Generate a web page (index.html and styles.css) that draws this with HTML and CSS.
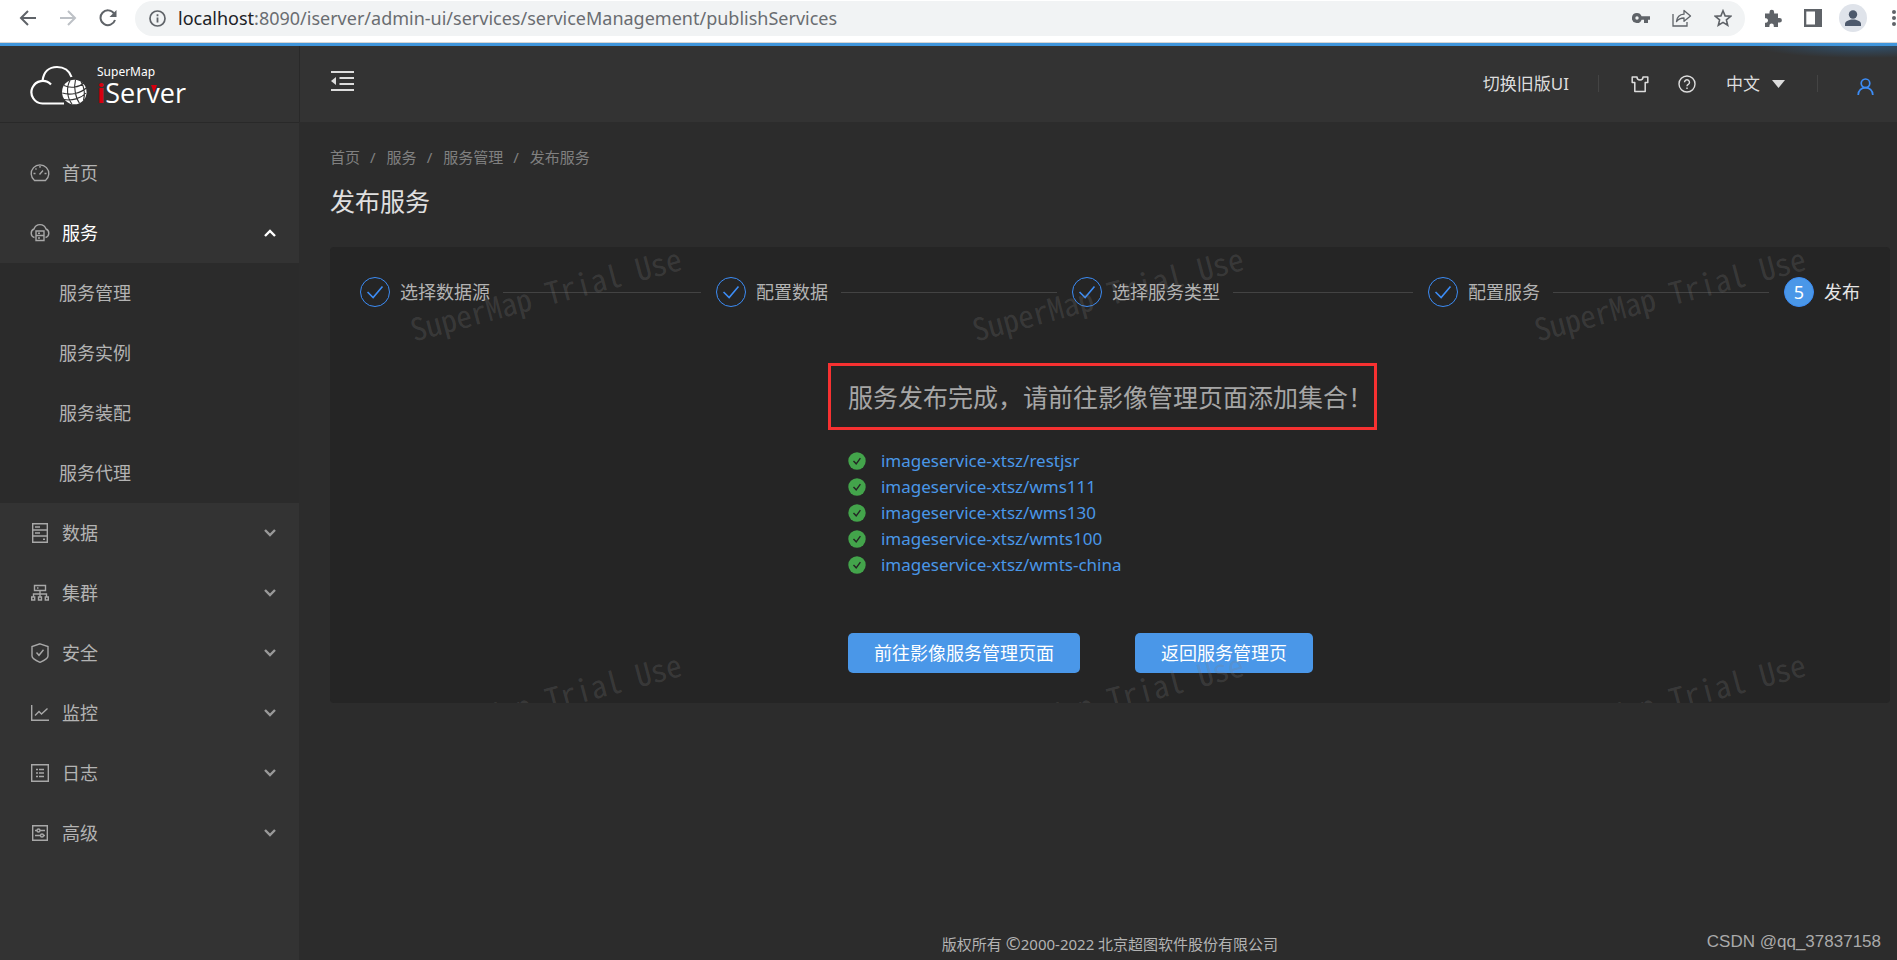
FILE: index.html
```html
<!DOCTYPE html>
<html lang="zh-CN">
<head>
<meta charset="utf-8">
<title>SuperMap iServer</title>
<link rel="stylesheet" href="styles.css">
</head>
<body>
<svg class="defs" width="0" height="0" aria-hidden="true">
  <symbol id="down" viewBox="0 0 12 12"><path d="M1 3 6 8 11 3" fill="none" stroke="currentColor" stroke-width="2.4"/></symbol>
  <symbol id="tick" viewBox="0 0 30 30"><path d="M7 15 13 21 23 9" fill="none" stroke="currentColor" stroke-width="1.7"/></symbol>
  <symbol id="ok" viewBox="0 0 18 18"><circle cx="9" cy="9" r="8.700" fill="#43a44b"/><path d="M5.500 9 8.200 11.800 12.400 6.200" fill="none" stroke="#252525" stroke-width="1.400"/></symbol>
</svg>

<div class="browser">
  <button class="nav" aria-label="后退"><svg width="18" height="18" viewBox="0 0 18 18"><path d="M17 9H2M9 2 2 9l7 7" fill="none" stroke="#5f6368" stroke-width="2"/></svg></button>
  <button class="nav" aria-label="前进"><svg width="18" height="18" viewBox="0 0 18 18"><path d="M1 9h15M9 2l7 7-7 7" fill="none" stroke="#bdc1c6" stroke-width="2"/></svg></button>
  <button class="nav" aria-label="刷新"><svg width="18" height="18" viewBox="0 0 18 18"><path d="M15 4.500A7.400 7.400 0 1 0 16 11" fill="none" stroke="#5f6368" stroke-width="2"/><path d="M17.500 1v7h-7z" fill="#5f6368"/></svg></button>
  <div class="address">
    <svg width="17" height="17" viewBox="0 0 17 17"><circle cx="8.500" cy="8.500" r="7.500" fill="none" stroke="#5f6368" stroke-width="1.700"/><path d="M8.500 7.500v5M8.500 4.300v1.900" stroke="#5f6368" stroke-width="1.800"/></svg>
    <span class="url"><b>localhost</b>:8090/iserver/admin-ui/services/serviceManagement/publishServices</span>
    <span class="address-tools">
      <svg width="18" height="18" viewBox="0 0 18 18" fill="#5f6368"><path fill-rule="evenodd" d="M5 4a5 5 0 1 0 4.600 6.700H12V14h4v-3.300h2V7.300H9.600A5 5 0 0 0 5 4zm0 3.300a1.700 1.700 0 1 1 0 3.400 1.700 1.700 0 0 1 0-3.400z"/></svg>
      <svg width="20" height="18" viewBox="0 0 20 18" fill="none" stroke="#5f6368" stroke-width="1.300"><path d="M1 5v12h14v-4"/><path d="M4.500 12.500C5 8 8 5.500 12 5.200V1.500L18.500 7 12 12.300V9C9 9 6.500 10 4.500 12.500z" stroke-linejoin="round"/></svg>
      <svg width="18" height="18" viewBox="0 0 18 18"><path d="M9 1.800 11.100 6.900 16.600 7.300 12.400 10.900 13.700 16.300 9 13.400 4.300 16.300 5.600 10.900 1.400 7.300 6.900 6.900z" fill="none" stroke="#5f6368" stroke-width="1.600"/></svg>
    </span>
  </div>
  <svg class="ext" width="18" height="18" viewBox="0 0 18 18"><path fill="#5f6368" d="M1 4.500h4.500V3a2.300 2.300 0 0 1 4.600 0v1.500H14V9h1.600a2.300 2.300 0 0 1 0 4.600H14V18H9.800v-1.300a2.200 2.200 0 0 0-4.400 0V18H1v-4.300h1.200a2.300 2.300 0 0 0 0-4.500H1z"/></svg>
  <svg class="panel-icon" width="18" height="18" viewBox="0 0 18 18"><path fill="#5f6368" fill-rule="evenodd" d="M0 0h18v18H0zM2.300 2.500v13H11v-13z"/></svg>
  <svg class="avatar" width="28" height="28" viewBox="0 0 28 28"><circle cx="14" cy="14" r="14" fill="#dfe3ea"/><circle cx="14" cy="10.500" r="4.200" fill="#4d596c"/><path d="M6 22v-2c0-3 4.500-4.500 8-4.500s8 1.500 8 4.500v2z" fill="#4d596c"/></svg>
  <svg class="more" width="4" height="16" viewBox="0 0 4 16" fill="#5f6368"><circle cx="2" cy="2" r="2"/><circle cx="2" cy="8" r="2"/><circle cx="2" cy="14" r="2"/></svg>
</div>

<div class="app">
  <aside class="sidebar">
    <div class="logo">
      <svg width="58" height="40" viewBox="0 0 58 40" fill="none" stroke="#fff">
        <path d="M34 38.500H12.500A11.300 11.300 0 1 1 21 19.500" stroke-width="2.200"/>
        <path d="M12.500 16C13.500 7 19 2 27 2c7 0 12.500 4 14.500 10" stroke-width="2.200"/>
        <circle cx="44.300" cy="27" r="12.300" fill="#fff" stroke="none"/>
        <g stroke="#333" stroke-width="1.100"><path d="M34 20.500c6 3 15 2 20-2.500M32.300 28c8 2.500 18 .5 24-5M34 34.500c8 1.500 17-1 22-6.500M40 15.500c-4 7-3 17 2 23.500M45.500 14.800c-2 7 0 18 4 23.500M51 16.500c3.500 6 4 13 2.500 19"/></g>
      </svg>
      <div class="brand"><span class="maker">SuperMap</span><span class="product"><i>i</i>Server<svg class="wedge" width="6" height="8" viewBox="0 0 6 8"><path d="M0 0h6L3 8z" fill="#d7000f"/></svg></span></div>
    </div>
    <nav class="menu">
      <a class="item" href="#"><svg viewBox="0 0 20 20"><path d="M4.500 17.500A8.800 8.800 0 1 1 15.500 17.500z"/><path d="M9.500 11.500 13 7.500M10 2.800v2M3.500 10.500h2M14.500 10.500h2M5.500 5.500l1 1"/></svg><span>首页</span></a>
      <a class="item active" href="#"><svg viewBox="0 0 20 20"><path d="M4.500 14.500A4.500 4.500 0 0 1 4 6a6.300 6.300 0 0 1 12 0 4.500 4.500 0 0 1-.5 8.500"/><path d="M6 8h8v9.500H6zM6 12.500h8M8 10.200h2M8 15h2"/></svg><span>服务</span><svg class="arrow up"><use href="#down"/></svg></a>
      <div class="submenu">
        <a href="#">服务管理</a><a href="#">服务实例</a><a href="#">服务装配</a><a href="#">服务代理</a>
      </div>
      <a class="item" href="#"><svg viewBox="0 0 20 20"><path d="M2.700.7h14.600v18.600H2.700zM2.700 7h14.600M2.700 13h14.600M5 4h5M5 10h5M13 16.200h2"/></svg><span>数据</span><svg class="arrow"><use href="#down"/></svg></a>
      <a class="item" href="#"><svg viewBox="0 0 20 20"><path d="M4.500 2.500h11v5h-11zM10 7.500v6M3.500 14v-3h13v3M1.700 14h3v3h-3zM8.500 14h3v3h-3zM15.300 14h3v3h-3zM7 5h1.500"/></svg><span>集群</span><svg class="arrow"><use href="#down"/></svg></a>
      <a class="item" href="#"><svg viewBox="0 0 20 20"><path d="M10 .8 18 3.500V13c0 2.500-5 5-8 6.300C7 18 2 15.500 2 13V3.500zM6.500 9.500 9 12.300l4.500-5.500"/></svg><span>安全</span><svg class="arrow"><use href="#down"/></svg></a>
      <a class="item" href="#"><svg viewBox="0 0 20 20"><path d="M1.700 2v15.300H19M5 12.500 9 8.500l2.500 2.500L17.500 5.500"/></svg><span>监控</span><svg class="arrow"><use href="#down"/></svg></a>
      <a class="item" href="#"><svg viewBox="0 0 20 20"><path d="M1.700 1.700h16.600v16.600H1.700zM6 6.500h2M9 6.500h5M6 10h2M9 10h5M6 13.500h2M9 13.500h5"/></svg><span>日志</span><svg class="arrow"><use href="#down"/></svg></a>
      <a class="item" href="#"><svg viewBox="0 0 20 20"><path d="M2.700 2.700h14.600v14.600H2.700zM5 7.500h2M10 7.500h5M5 12.500h5M13.500 12.500H15"/><circle cx="8.500" cy="7.500" r="1.500"/><circle cx="12" cy="12.500" r="1.500"/></svg><span>高级</span><svg class="arrow"><use href="#down"/></svg></a>
    </nav>
  </aside>

  <div class="main">
    <header class="header">
      <button class="plain fold" aria-label="收起菜单"><svg width="24" height="22" viewBox="0 0 24 22"><path d="M0 2h23M8.500 8H23M8.500 14H23M0 20h23" stroke="#ddd" stroke-width="2"/><path d="M5 7v8L0 11z" fill="#ddd"/></svg></button>
      <div class="tools">
        <button class="plain">切换旧版UI</button>
        <span class="sep sep-a"></span>
        <button class="plain shirt" aria-label="主题"><svg width="18" height="18" viewBox="0 0 18 18"><path d="M1.200 2H6c0 4 6 4 6 0h4.800v5.500h-2.600V16.500H3.800V7.500H1.200z" fill="none" stroke="#ddd" stroke-width="1.500" stroke-linejoin="round"/></svg></button>
        <button class="plain help" aria-label="帮助"><svg width="18" height="18" viewBox="0 0 18 18" fill="none" stroke="#ddd" stroke-width="1.400"><circle cx="9" cy="9" r="8"/><path d="M6.500 7.300a2.500 2.500 0 1 1 3.800 2.100C9.300 10 9 10.300 9 11.300M9 12.500v1.500"/></svg></button>
        <button class="plain lang">中文<svg width="13" height="8" viewBox="0 0 13 8"><path d="M0 0h13L6.500 8z" fill="#ddd"/></svg></button>
        <span class="sep"></span>
        <button class="plain user" aria-label="用户"><svg width="17" height="17" viewBox="0 0 17 17" fill="none" stroke="#3c8cf5" stroke-width="1.700"><circle cx="8.500" cy="5.300" r="4.300"/><path d="M1.200 17c0-4.500 3.300-7.300 7.300-7.300s7.300 2.800 7.300 7.300"/></svg></button>
      </div>
    </header>

    <main class="content">
      <nav class="crumbs"><a href="#">首页</a><span>/</span><a href="#">服务</a><span>/</span><a href="#">服务管理</a><span>/</span><a href="#">发布服务</a></nav>
      <h1>发布服务</h1>
      <section class="card">
        <ol class="steps">
          <li><svg class="dot"><use href="#tick"/></svg><span>选择数据源</span></li>
          <li><svg class="dot"><use href="#tick"/></svg><span>配置数据</span></li>
          <li><svg class="dot"><use href="#tick"/></svg><span>选择服务类型</span></li>
          <li><svg class="dot"><use href="#tick"/></svg><span>配置服务</span></li>
          <li class="current"><span class="dot">5</span><span>发布</span></li>
        </ol>
        <div class="result">
          <h2>服务发布完成，请前往影像管理页面添加集合！</h2>
          <ul>
            <li><svg width="18" height="18"><use href="#ok"/></svg><a href="#">imageservice-xtsz/restjsr</a></li>
            <li><svg width="18" height="18"><use href="#ok"/></svg><a href="#">imageservice-xtsz/wms111</a></li>
            <li><svg width="18" height="18"><use href="#ok"/></svg><a href="#">imageservice-xtsz/wms130</a></li>
            <li><svg width="18" height="18"><use href="#ok"/></svg><a href="#">imageservice-xtsz/wmts100</a></li>
            <li><svg width="18" height="18"><use href="#ok"/></svg><a href="#">imageservice-xtsz/wmts-china</a></li>
          </ul>
          <div class="actions"><button>前往影像服务管理页面</button><button>返回服务管理页</button></div>
        </div>
        <div class="watermark" aria-hidden="true">
          <span>SuperMap Trial Use</span><span>SuperMap Trial Use</span><span>SuperMap Trial Use</span>
          <span>SuperMap Trial Use</span><span>SuperMap Trial Use</span><span>SuperMap Trial Use</span>
        </div>
      </section>
    </main>
    <footer><span>版权所有 <span class="copy">©</span>2000-2022 北京超图软件股份有限公司</span><span class="stamp">CSDN @qq_37837158</span></footer>
  </div>
</div>
</body>
</html>
```
FILE: styles.css
```css
* { box-sizing: border-box; }
body {
  margin: 0;
  min-height: 100vh;
  display: flex;
  flex-direction: column;
  overflow-x: hidden;
  background: #2c2c2c;
  color: #b3b3b3;
  font: 18px/26px "Noto Sans", "Noto Sans CJK SC", sans-serif;
}
a { color: inherit; text-decoration: none; }
button { font: inherit; cursor: pointer; }
svg { flex: none; display: block; }
.defs { position: absolute; }

.browser {
  display: flex;
  align-items: center;
  height: 46px;
  padding: 0 1px 7px 19px;
  background: #fff;
  border-bottom: 3px solid #4096dc;
  box-shadow: inset 0 -1px #d5d5d5;
}
.nav { display: flex; width: 18px; margin-right: 22px; padding: 0; border: 0; background: none; }
.address {
  flex: 1;
  display: flex;
  align-items: center;
  height: 35px;
  margin: 0 19px 0 0;
  padding: 0 13px 0 14px;
  border-radius: 18px;
  background: #f1f3f4;
}
.nav:nth-child(3) { margin-right: 18px; }
.url { flex: 1; margin-left: 12px; color: #6a6d71; white-space: nowrap; }
.url b { color: #202124; font-weight: 400; }
.address-tools { display: flex; gap: 22px; }
.panel-icon { margin-left: 22px; }
.avatar { margin-left: 17px; }
.more { margin-left: 25px; }

.app { flex: 1; display: flex; }
.sidebar { flex: none; width: 299px; background: #333; }
.logo {
  display: flex;
  gap: 9px;
  height: 77px;
  padding: 19px 0 0 30px;
  border-bottom: 1px solid #292929;
  color: #fff;
}
.brand { display: flex; flex-direction: column; }
.maker { font-size: 12px; line-height: 14px; }
.product { position: relative; font-size: 27px; line-height: 28px; font-family: "Open Sans", sans-serif; }
.product i { color: #d7000f; font-style: normal; font-weight: 700; }
.wedge { position: absolute; left: 54px; top: 6px; }
.menu { padding-top: 20px; }
.item { display: flex; align-items: center; height: 60px; padding: 0 23px 0 30px; }
.item > svg:first-child { width: 20px; height: 20px; margin-right: 12px; fill: none; stroke: #a8a8a8; stroke-width: 1.4; }
.item .arrow { width: 12px; height: 12px; margin-left: auto; color: #999; }
.item .up { transform: rotate(180deg); color: #fff; }
.active { color: #fff; }
.submenu { background: #2b2b2b; }
.submenu a { display: flex; align-items: center; height: 60px; padding-left: 59px; }

.main { flex: 1; min-width: 0; display: flex; flex-direction: column; }
.header {
  display: flex;
  align-items: center;
  justify-content: space-between;
  height: 76px;
  padding: 0 23px 1px 31px;
  border-left: 1px solid #292929;
  background: radial-gradient(ellipse 110px 12px at 98% 0, #30506c, #333);
  color: #ddd;
  font-size: 17px;
}
.plain { display: flex; align-items: center; padding: 0; border: 0; background: none; color: inherit; }
.fold { padding-bottom: 5px; }
.tools { display: flex; align-items: center; }
.sep { width: 1px; height: 17px; margin: 0 39px 0 32px; background: #444; }
.sep-a { margin: 0 32px 0 29px; }
.help { margin: 0 30px 0 29px; }
.lang { gap: 12px; }
.user { padding-top: 6px; }

.content { flex: 1; padding: 22px 7px 20px 31px; }
.crumbs { display: flex; font-size: 15px; color: #808080; }
.crumbs span { margin: 0 11px 0 10px; }
h1 { margin: 12px 0 27px; font-size: 25px; line-height: 38px; font-weight: 400; color: #e0e0e0; }
.card { position: relative; overflow: hidden; padding: 30px; border-radius: 4px; background: #252525; }
.steps { display: flex; margin: 0; padding: 0; list-style: none; }
.steps li { flex: 1; display: flex; align-items: center; gap: 10px; white-space: nowrap; }
.steps li::after { content: ""; flex: 1; height: 1px; margin: 0 15px 0 3px; background: #434343; }
.steps li.current { flex: none; color: #e6e6e6; }
.steps li.current::after { display: none; }
.dot { width: 30px; height: 30px; border: 1px solid #3c8cf5; border-radius: 50%; color: #3c8cf5; }
.current .dot { background: #4a97e8; color: #fff; text-align: center; line-height: 28px; }

.result { width: max-content; margin: 56px auto 0; padding-right: 15px; }
h2 { margin: 0 0 18px; padding: 12px 1px 11px 17px; border: 3px solid #f73131; font-size: 25px; line-height: 38px; font-weight: 400; color: #a6a6a6; }
.result ul { margin: 0; padding: 0 0 0 20px; list-style: none; }
.result li { display: flex; align-items: center; gap: 15px; font-size: 17px; color: #4a97e8; }
.actions { display: flex; gap: 55px; margin-top: 55px; padding-left: 20px; }
.actions button { height: 40px; padding: 0 26px; border: 0; border-radius: 5px; background: #4a97e8; color: #fff; }
.watermark {
  position: absolute;
  inset: 0;
  display: grid;
  grid-template-columns: repeat(3, 562px);
  grid-auto-rows: 406px;
  pointer-events: none;
  color: rgba(128, 128, 128, 0.24);
  font: 31px/32px "Noto Sans CJK SC", monospace;
  font-feature-settings: "hwid";
}
.watermark span { width: max-content; height: 32px; margin: 30px 0 0 76px; transform: rotate(-15deg); }

footer { position: relative; padding: 0 7px 3px 31px; text-align: center; font-size: 15px; }
.copy { font-size: 18px; line-height: 18px; }
.stamp { position: absolute; right: 16px; bottom: 5px; font-family: "Liberation Sans", sans-serif; font-size: 17px; color: #aaa; }
```
